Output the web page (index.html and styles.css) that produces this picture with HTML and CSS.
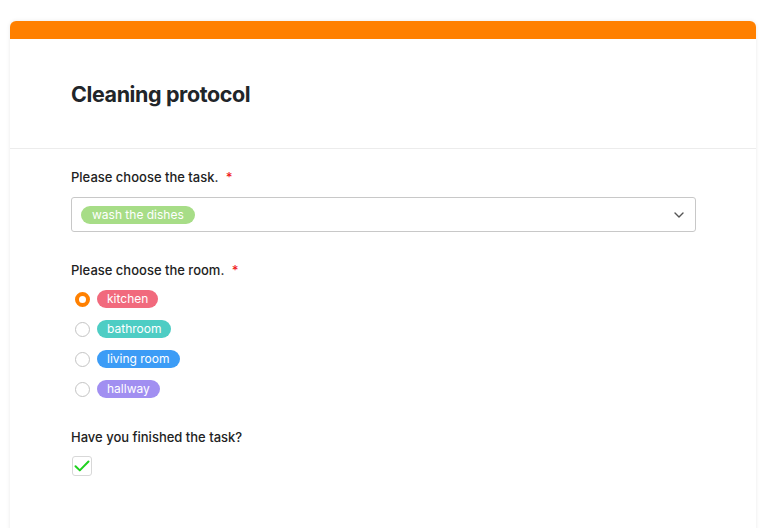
FILE: index.html
```html
<!DOCTYPE html>
<html>
<head>
<meta charset="utf-8">
<link rel="stylesheet" href="styles.css">
</head>
<body>
<div class="card">
  <div class="accent"></div>
  <div class="header">
    <h1 class="title">Cleaning protocol</h1>
  </div>
  <div class="body">
    <div class="field">
      <div class="label">Please choose the task. <span class="req">*</span></div>
      <div class="select">
        <span class="pill pill-green">wash the dishes</span>
        <svg class="chev" width="10" height="6" viewBox="0 0 10 6"><path d="M1 1l4 4 4-4" fill="none" stroke="#555" stroke-width="1.4" stroke-linecap="round" stroke-linejoin="round"/></svg>
      </div>
    </div>
    <div class="field">
      <div class="label">Please choose the room. <span class="req">*</span></div>
      <div class="radios">
        <div class="radio-row"><span class="radio checked"></span><span class="pill pill-pink">kitchen</span></div>
        <div class="radio-row"><span class="radio"></span><span class="pill pill-teal">bathroom</span></div>
        <div class="radio-row"><span class="radio"></span><span class="pill pill-blue">living room</span></div>
        <div class="radio-row"><span class="radio"></span><span class="pill pill-purple">hallway</span></div>
      </div>
    </div>
    <div class="field">
      <div class="label">Have you finished the task?</div>
      <div class="checkbox">
        <svg width="16" height="12" viewBox="0 0 16 12"><path d="M1.5 6.2l4.3 4.2L14.5 1.5" fill="none" stroke="#1ed11e" stroke-width="2" stroke-linecap="round" stroke-linejoin="round"/></svg>
      </div>
    </div>
  </div>
</div>
</body>
</html>
```
FILE: styles.css
```css
html, body {
  margin: 0;
  padding: 0;
  background: #fff;
}
body {
  font-family: Inter, "Helvetica Neue", Arial, sans-serif;
  color: #1f2327;
  padding: 21px 12px 0 10px;
}
.card {
  border-radius: 6px 6px 0 0;
  box-shadow: 0 0 4px rgba(0,0,0,0.09);
  background: #fff;
  min-height: 520px;
  overflow: hidden;
}
.accent {
  height: 18px;
  background: #ff8000;
}
.header {
  height: 110px;
  border-bottom: 1px solid #ececec;
  padding: 0 61px;
  display: flex;
  align-items: center;
  padding-top: 1px;
  box-sizing: border-box;
}
.title {
  margin: 0;
  font-size: 21.5px;
  font-weight: 700;
  letter-spacing: -0.4px;
  color: #212529;
}
.body {
  padding: 19px 61px 0 61px;
}
.field {
  margin-bottom: 24px;
}
.label {
  font-size: 13px;
  font-weight: 500;
  line-height: 18px;
  color: #222;
  margin-bottom: 11px;
}
.req {
  color: #f01c1c;
  margin-left: 4px;
}
.select {
  width: 625px;
  height: 35px;
  box-sizing: border-box;
  border: 1px solid #c8c8c8;
  border-radius: 3px;
  display: flex;
  align-items: center;
  justify-content: space-between;
  padding: 0 11px 0 9px;
  margin-bottom: 29px;
}
.chev {
  display: block;
}
.pill {
  display: inline-flex;
  align-items: center;
  height: 18px;
  padding: 0 10px;
  border-radius: 9px;
  color: #fff;
  font-size: 12px;
  line-height: 18px;
}
.pill-green { background: #a7dd87; padding: 0 11px; }
.pill-pink { background: #f16a7d; }
.pill-teal { background: #4ecdc4; }
.pill-blue { background: #3c9cf6; }
.pill-purple { background: #a18ff1; }
.radios {
  margin-top: -6px;
}
.radio-row {
  height: 30px;
  display: flex;
  align-items: center;
}
.radio {
  width: 15px;
  height: 15px;
  box-sizing: border-box;
  border: 1px solid #c4c4c4;
  border-radius: 50%;
  margin: 0 7px 0 4px;
  background: #fff;
}
.radio.checked {
  border: 4px solid #ff8000;
}
.checkbox {
  width: 20px;
  height: 20px;
  box-sizing: border-box;
  border: 1px solid #d8d8d8;
  border-radius: 3px;
  margin-left: 1px;
  margin-top: -1px;
  display: flex;
  align-items: center;
  justify-content: center;
}
.checkbox svg { display: block; }
```
